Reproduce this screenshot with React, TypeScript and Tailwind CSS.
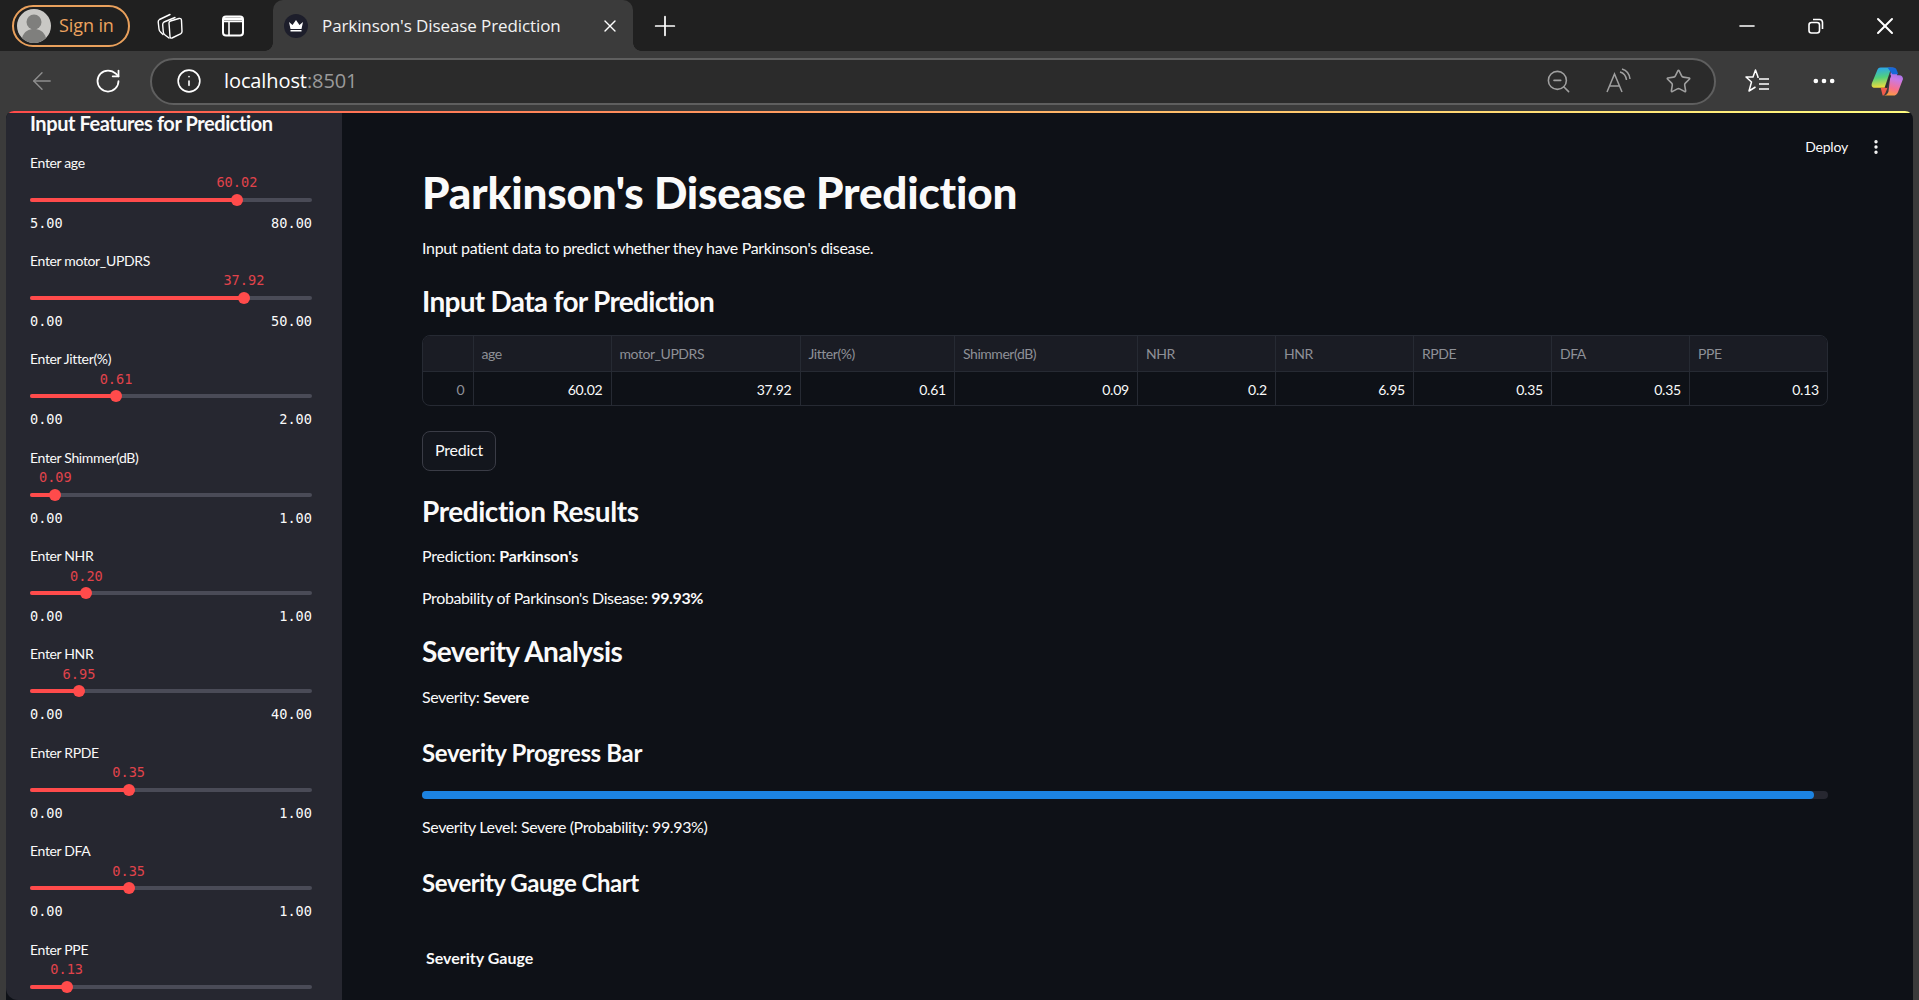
import { ArrowLeft, Ellipsis, EllipsisVertical, Info, Minus, Plus, RotateCw, Star, X, ZoomOut } from "lucide-react"

const sliders = [
  { label: "Enter age", value: 60.02, min: 5, max: 80 },
  { label: "Enter motor_UPDRS", value: 37.92, min: 0, max: 50 },
  { label: "Enter Jitter(%)", value: 0.61, min: 0, max: 2 },
  { label: "Enter Shimmer(dB)", value: 0.09, min: 0, max: 1 },
  { label: "Enter NHR", value: 0.2, min: 0, max: 1 },
  { label: "Enter HNR", value: 6.95, min: 0, max: 40 },
  { label: "Enter RPDE", value: 0.35, min: 0, max: 1 },
  { label: "Enter DFA", value: 0.35, min: 0, max: 1 },
  { label: "Enter PPE", value: 0.13, min: 0, max: 1 },
]

const columns = [
  { name: "", value: "0" },
  { name: "age", value: "60.02" },
  { name: "motor_UPDRS", value: "37.92" },
  { name: "Jitter(%)", value: "0.61" },
  { name: "Shimmer(dB)", value: "0.09" },
  { name: "NHR", value: "0.2" },
  { name: "HNR", value: "6.95" },
  { name: "RPDE", value: "0.35" },
  { name: "DFA", value: "0.35" },
  { name: "PPE", value: "0.13" },
]

function Slider({ label, value, min, max }: { label: string; value: number; min: number; max: number }) {
  const pct = ((value - min) / (max - min)) * 100
  return (
    <div className="h-[98.4px]">
      <div className="h-5 text-[14px] leading-5 tracking-[-0.35px] text-[#fafafa]">{label}</div>
      <div className="relative mt-[25px] h-1 rounded-full bg-[#4a4b57]">
        <div className="h-1 rounded-full bg-[#ff4b4b]" style={{ width: `${pct}%` }} />
        <div className="absolute top-[-4px] ml-[-6px] h-3 w-3 rounded-full bg-[#ff4b4b]" style={{ left: `${pct}%` }} />
        <div
          className="absolute top-[-25.5px] -translate-x-1/2 font-['DejaVu_Sans_Mono',monospace] text-[13.6px] leading-5 text-[#e0434b]"
          style={{ left: `${pct}%` }}
        >
          {value.toFixed(2)}
        </div>
      </div>
      <div className="mt-[11px] flex justify-between font-['DejaVu_Sans_Mono',monospace] text-[13.6px] leading-5 text-[#fafafa]">
        <span>{min.toFixed(2)}</span>
        <span>{max.toFixed(2)}</span>
      </div>
    </div>
  )
}

function TabStrip() {
  return (
    <div className="flex h-[51px] items-center bg-[#202020] font-['Open_Sans',sans-serif] text-white">
      <div className="ml-3 flex h-[42px] w-[118px] items-center rounded-full border-2 border-[#e9a05c] pl-[3px]">
        <svg width="34" height="34" viewBox="0 0 34 34">
          <circle cx="17" cy="17" r="17" fill="#c9c8c5" />
          <circle cx="17" cy="13" r="7.5" fill="#7f7f7d" />
          <path d="M5 29c2-7 7-9 12-9s10 2 12 9a17 17 0 0 1-24 0z" fill="#7f7f7d" />
        </svg>
        <span className="ml-[8px] text-[18px] tracking-[-0.1px] text-[#eda35f]">Sign in</span>
      </div>
      <div className="ml-6 flex h-8 w-8 items-center justify-center">
        <svg width="26" height="26" viewBox="0 0 26 26" fill="none" stroke="#fff" strokeWidth="1.4" strokeLinejoin="round" strokeLinecap="round">
          <path d="M13 1.500L2.500 6.500Q1 7.500 1.200 9L2 16Q2.200 18 3.500 19L6 21.500" />
          <path d="M18 4.500L7 9Q5.500 10 5.700 12L6.300 19Q6.500 21 8 22L12 25" />
          <path d="M12 10Q12 8.500 13.500 8L22 5.500Q24.500 5 24.500 7.500L25 18.500Q25 20 23.500 20.800L15 25Q13 25.500 13 23.500z" />
        </svg>
      </div>
      <div className="ml-[31px] flex h-8 w-8 items-center justify-center">
        <svg width="24" height="24" viewBox="0 0 24 24" fill="none" stroke="#fff" strokeWidth="2">
          <rect x="2" y="2.5" width="20" height="19" rx="3" />
          <path d="M2 7.5h20M8 7.5v14" strokeWidth="1.6" />
          <path d="M3 5h18" strokeWidth="3" />
        </svg>
      </div>
      <div className="relative ml-6 flex h-[51px] w-[360px] items-center rounded-t-[10px] bg-[#3b3b3b] pl-[11px]">
        <div className="absolute bottom-0 left-[-8px] h-2 w-2 bg-[radial-gradient(circle_at_0_0,#202020_7.5px,#3b3b3b_8px)]" />
        <div className="absolute bottom-0 right-[-8px] h-2 w-2 bg-[radial-gradient(circle_at_100%_0,#202020_7.5px,#3b3b3b_8px)]" />
        <div className="flex h-6 w-6 items-center justify-center rounded-full bg-[#1d1e2b]">
          <svg width="16" height="12" viewBox="0 0 16 12" fill="#fff">
            <path d="M1 2l3.5 3L8 0l3.500 5L15 2l-1.500 7h-11z" />
            <path d="M2.500 10h11v1.500h-11z" />
          </svg>
        </div>
        <span className="ml-[14px] text-[17px] tracking-[-0.1px] text-[#f2f2f2]">Parkinson's Disease Prediction</span>
        <X className="absolute left-[327px] h-5 w-5" strokeWidth={1.6} />
      </div>
      <div className="ml-4 flex h-8 w-8 items-center justify-center">
        <Plus className="h-8 w-8" strokeWidth={1.3} />
      </div>
      <div className="ml-auto flex gap-[37px] pr-[18px]">
        <div className="flex h-8 w-8 items-center justify-center">
          <Minus className="h-6 w-6" strokeWidth={1.6} />
        </div>
        <div className="flex h-8 w-8 items-center justify-center">
          <svg width="16" height="16" viewBox="0 0 16 16" fill="none" stroke="#fff" strokeWidth="1.6">
            <rect x="1" y="4.500" width="10.500" height="10.500" rx="2.500" />
            <path d="M5 1.500h6.500a3 3 0 0 1 3 3V11" />
          </svg>
        </div>
        <div className="flex h-8 w-8 items-center justify-center">
          <X className="h-7 w-7" strokeWidth={1.7} />
        </div>
      </div>
    </div>
  )
}

function Toolbar() {
  return (
    <div className="flex h-[60px] items-center font-['Open_Sans',sans-serif] text-white">
      <div className="ml-[26px] flex h-8 w-8 items-center justify-center text-[#8f8f8f]">
        <ArrowLeft className="h-7 w-7" strokeWidth={1.2} />
      </div>
      <div className="ml-[34px] flex h-8 w-8 items-center justify-center">
        <RotateCw className="h-7 w-7" strokeWidth={1.5} />
      </div>
      <div className="ml-[26px] flex h-[47px] w-[1566px] items-center rounded-full border-2 border-[#5f5f5f] bg-[#2b2b2b] pl-[21px] pr-[20px]">
        <div className="flex h-8 w-8 items-center justify-center">
          <Info className="h-[26px] w-[26px]" strokeWidth={1.5} />
        </div>
        <span className="ml-[19px] text-[20px] tracking-[-0.1px]">
          localhost<span className="text-[#9a9a9a]">:8501</span>
        </span>
        <div className="ml-auto flex gap-[28px] text-[#a0a0a0]">
          <div className="flex h-8 w-8 items-center justify-center">
            <ZoomOut className="h-[27px] w-[27px]" strokeWidth={1.4} />
          </div>
          <div className="flex h-8 w-8 items-center justify-center">
            <svg width="26" height="26" viewBox="0 0 26 26" fill="none" stroke="currentColor" strokeWidth="1.5">
              <path d="M2 24L9.500 6 17 24M4.500 18h10" />
              <path d="M15 4c4 1 6 4 6.500 8M17 1c5 1.500 7.500 5 8 10" />
            </svg>
          </div>
          <div className="flex h-8 w-8 items-center justify-center">
            <Star className="h-[27px] w-[27px]" strokeWidth={1.4} />
          </div>
        </div>
      </div>
      <div className="ml-[26px] flex h-8 w-8 items-center justify-center">
        <svg width="26" height="26" viewBox="0 0 26 26" fill="none" stroke="#fff" strokeWidth="1.5" strokeLinejoin="round">
          <path d="M13 10V9L10.500 2 8 9H1l5.500 5L4 23l6.500-4" />
          <path d="M14 11h10M14 16h10M14 21h10" />
        </svg>
      </div>
      <div className="ml-[34px] flex h-8 w-8 items-center justify-center">
        <Ellipsis className="h-7 w-7" strokeWidth={2} />
      </div>
      <div className="ml-[31px] flex h-8 w-8 items-center justify-center">
        <svg width="33" height="31" viewBox="0 0 33 31">
          <defs>
            <linearGradient id="copilotA" x1="0.3" y1="0" x2="0.4" y2="1">
              <stop offset="0" stopColor="#2aa5f0" />
              <stop offset="0.5" stopColor="#52d07c" />
              <stop offset="1" stopColor="#f4dc3a" />
            </linearGradient>
            <linearGradient id="copilotB" x1="0.6" y1="0" x2="0.4" y2="1">
              <stop offset="0" stopColor="#8a6cf0" />
              <stop offset="0.4" stopColor="#c87ae6" />
              <stop offset="0.75" stopColor="#f8708c" />
              <stop offset="1" stopColor="#fb9f42" />
            </linearGradient>
          </defs>
          <path d="M10 1h11l-7 21H4c-3 0-4-2-3-5l5-12c1-3 2-4 4-4z" fill="url(#copilotA)" />
          <path d="M21 1c3 0 4 1 5 4l1 4h2c3 0 4 2 4 4l-5 13c-1 3-3 4-5 4H12c4 0 5-2 6-4z" fill="url(#copilotB)" />
          <path d="M17 1h6c2 0 3 1 4 4l1 3h-6z" fill="#1668d8" />
          <path d="M10 22h7l-2 5c-1 2-2 3-3 3z" fill="#ef5a4a" />
          <path d="M20 9l-4.500 13" stroke="#2c2b33" strokeWidth="1.6" />
        </svg>
      </div>
    </div>
  )
}

function Sidebar() {
  return (
    <aside className="h-full w-[336px] shrink-0 overflow-hidden rounded-bl-xl bg-[#262730] pl-6 pr-[30px]">
      <h2 className="mb-[19.5px] h-5 text-[20px] font-bold leading-5 tracking-[-0.43px] text-[#fafafa]">Input Features for Prediction</h2>
      {sliders.map((s) => (
        <Slider key={s.label} {...s} />
      ))}
    </aside>
  )
}

function DataTable() {
  return (
    <div className="mt-[14px] grid h-[71px] grid-cols-[50.5px_138px_189px_154.5px_183px_138px_138px_138px_138px_1fr] grid-rows-[36px_35px] overflow-hidden rounded-lg border border-[#262a33] text-[14px]">
      {columns.map((c, i) => (
        <div
          key={c.name + "h"}
          className={`flex items-center border-b border-[#262a33] bg-[#1a1c24] px-2 tracking-[-0.45px] text-[#8e9097] ${i < 9 ? "border-r" : ""}`}
        >
          {c.name}
        </div>
      ))}
      {columns.map((c, i) => (
        <div
          key={c.name + "v"}
          className={`flex items-center justify-end border-[#262a33] px-2 tracking-[-0.2px] ${i === 0 ? "text-[#8e9097]" : "text-[#fafafa]"} ${i < 9 ? "border-r" : ""}`}
        >
          {c.value}
        </div>
      ))}
    </div>
  )
}

export default function App() {
  return (
    <div className="flex h-screen w-full flex-col overflow-hidden bg-[#3b3b3b] font-['Lato',sans-serif]">
      <TabStrip />
      <Toolbar />
      <div className="relative mx-[6px] flex min-h-0 flex-1 flex-col overflow-hidden rounded-t-lg bg-[#0e1117]">
        <div className="h-[2px] shrink-0 bg-gradient-to-r from-[#ff4b4b] to-[#fffd80]" />
        <div className="flex min-h-0 flex-1">
          <Sidebar />
          <main className="relative flex-1 pl-20 pr-[85px] text-[#fafafa]">
            <div className="absolute right-[65px] top-[24px] text-[14px] leading-5 tracking-[-0.2px]">Deploy</div>
            <EllipsisVertical className="absolute right-[28px] top-[25px] h-[18px] w-[18px]" strokeWidth={2.5} />
            <h1 className="mt-[49px] h-[60px] text-[44px] font-black leading-[60px] tracking-[-0.2px]">Parkinson's Disease Prediction</h1>
            <p className="mt-[14px] h-6 text-[16px] leading-6 tracking-[-0.33px]">Input patient data to predict whether they have Parkinson's disease.</p>
            <h3 className="mt-[21px] h-10 text-[28px] font-bold leading-10 tracking-[-0.7px]">Input Data for Prediction</h3>
            <DataTable />
            <button className="mt-[25px] h-10 w-[74px] rounded-lg border border-[#3a3c46] bg-[#13161d] pb-[2px] text-[16px] tracking-[-0.2px]">Predict</button>
            <h3 className="mt-[21px] h-10 text-[28px] font-bold leading-[38px] tracking-[-0.45px]">Prediction Results</h3>
            <p className="mt-[13px] h-6 text-[16px] leading-[22px] tracking-[-0.18px]">
              Prediction: <strong>Parkinson's</strong>
            </p>
            <p className="mt-[18px] h-6 text-[16px] leading-[22px] tracking-[-0.38px]">
              Probability of Parkinson's Disease: <strong>99.93%</strong>
            </p>
            <h3 className="mt-[21px] h-10 text-[28px] font-bold leading-[38px] tracking-[-0.55px]">Severity Analysis</h3>
            <p className="mt-[14px] h-6 text-[16px] leading-[22px] tracking-[-0.4px]">
              Severity: <strong>Severe</strong>
            </p>
            <h4 className="mt-[25px] h-9 text-[24px] font-bold leading-9 tracking-[-0.35px]">Severity Progress Bar</h4>
            <div className="mt-5 h-2 rounded-full bg-[#262730]">
              <div className="h-2 rounded-full bg-[#1c83e1]" style={{ width: "99%" }} />
            </div>
            <p className="mt-[17px] h-6 text-[16px] leading-[22px] tracking-[-0.38px]">Severity Level: Severe (Probability: 99.93%)</p>
            <h4 className="mt-[25px] h-9 text-[24px] font-bold leading-9 tracking-[-0.48px]">Severity Gauge Chart</h4>
            <div className="ml-1 mt-[46px] h-6 text-[16px] font-bold leading-[22px]">Severity Gauge</div>
          </main>
        </div>
      </div>
    </div>
  )
}
